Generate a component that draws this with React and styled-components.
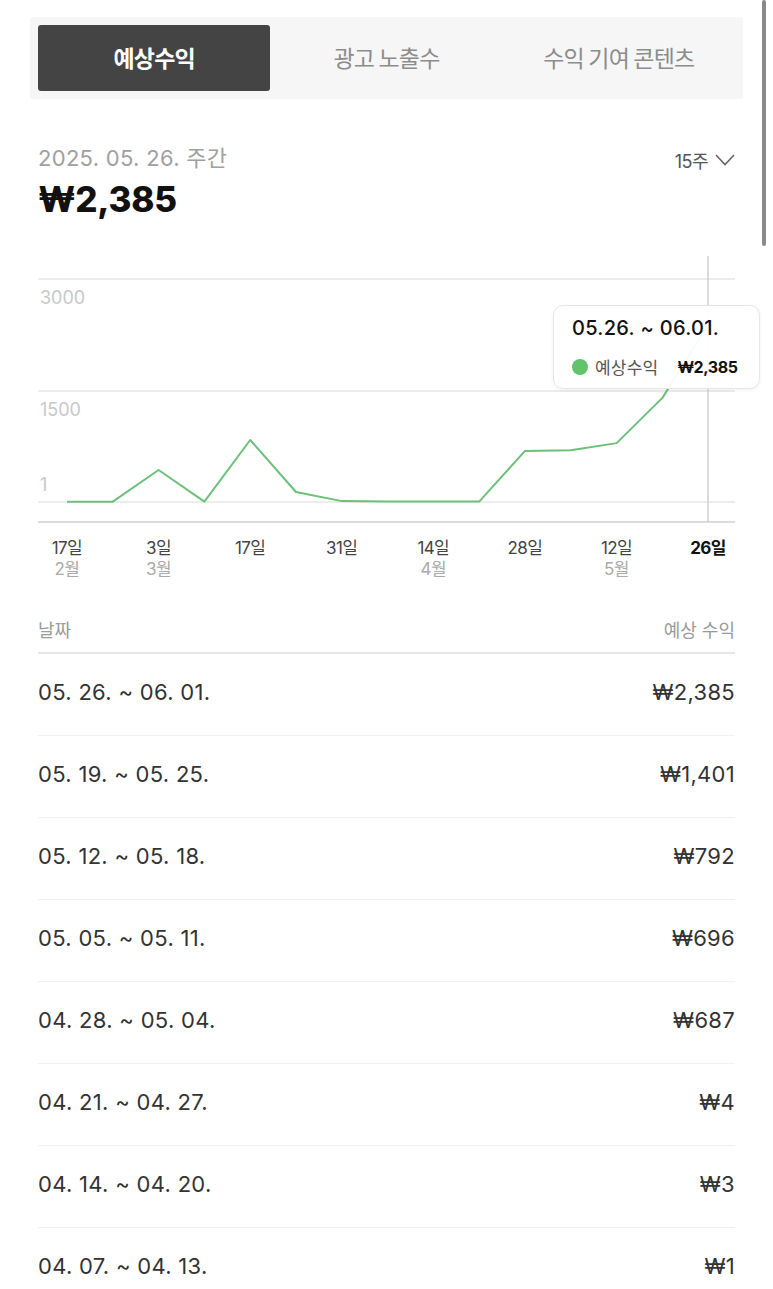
import React from "react";
import styled, { createGlobalStyle } from "styled-components";

const Global = createGlobalStyle`
  html, body { margin: 0; padding: 0; background: #fff; }
  body { font-family: Inter, "Noto Sans CJK KR", sans-serif; color: #222; }
  * { box-sizing: border-box; }
`;

const Page = styled.div`
  width: 773px;
  height: 1289px;
  overflow: hidden;
  position: relative;
  padding-top: 17px;
`;

const ScrollThumb = styled.div`
  position: absolute;
  right: 7px;
  top: 0;
  width: 4px;
  height: 246px;
  border-radius: 2px;
  background: #8a8a8a;
`;

const Tabs = styled.div`
  margin: 0 30px;
  padding: 8px;
  background: #f6f6f6;
  border-radius: 3px;
  display: grid;
  grid-template-columns: repeat(3, 1fr);
  height: 82px;
`;

const Tab = styled.div`
  display: flex;
  align-items: center;
  justify-content: center;
  border-radius: 3px;
  font-family: "Noto Sans CJK KR", sans-serif;
  font-size: 23px;
  letter-spacing: -0.8px;
  padding-bottom: 2px;
  font-weight: ${(p) => (p.$active ? 700 : 400)};
  color: ${(p) => (p.$active ? "#fff" : "#8c8c8c")};
  background: ${(p) => (p.$active ? "#444444" : "transparent")};
`;

const Content = styled.div`
  padding: 0 38px;
`;

const Summary = styled.div`
  display: flex;
  justify-content: space-between;
  align-items: flex-start;
  margin-top: 45px;
`;

const SummaryLeft = styled.div`
  display: flex;
  flex-direction: column;
`;

const DateLabel = styled.div`
  font-size: 22px;
  line-height: 28px;
  color: #a0a0a0;
  letter-spacing: 0.3px;
`;

const Amount = styled.div`
  font-size: 35px;
  line-height: 42px;
  font-weight: 800;
  color: #111;
  margin-top: 6px;
  letter-spacing: -0.3px;
`;

const PeriodSelect = styled.div`
  display: flex;
  align-items: center;
  gap: 7px;
  font-size: 18px;
  color: #555;
  margin-top: 3px;
  letter-spacing: -0.5px;
`;

const ChartWrap = styled.div`
  position: relative;
  margin-top: 36px;
  height: 267px;
`;

const Tooltip = styled.div`
  position: absolute;
  left: 515px;
  top: 49px;
  width: 207px;
  height: 84px;
  background: rgba(255, 255, 255, 0.94);
  border: 1px solid #e6e6e6;
  border-radius: 10px;
  box-shadow: 0 1px 4px rgba(0, 0, 0, 0.06);
  padding: 9px 0 0 18px;
  display: flex;
  flex-direction: column;
  gap: 13px;
`;

const TipTitle = styled.div`
  font-size: 20px;
  line-height: 26px;
  color: #111;
  font-weight: 500;
  letter-spacing: 0.3px;
`;

const TipRow = styled.div`
  display: flex;
  align-items: center;
  gap: 7px;
`;

const Dot = styled.span`
  width: 16px;
  height: 16px;
  border-radius: 50%;
  background: #5fc46a;
`;

const TipLabel = styled.span`
  font-family: "Noto Sans CJK KR", sans-serif;
  font-size: 17px;
  color: #555;
  margin-right: 12px;
  letter-spacing: 0.2px;
`;

const TipValue = styled.span`
  font-size: 16px;
  font-weight: 700;
  color: #111;
  letter-spacing: -0.4px;
`;

const XAxis = styled.div`
  display: grid;
  grid-template-columns: repeat(15, 45.8px);
  padding-left: 6px;
  margin-top: 15px;
  height: 62px;
`;

const XLabel = styled.div`
  display: flex;
  flex-direction: column;
  align-items: center;
  white-space: nowrap;
  line-height: 21px;
`;

const Day = styled.span`
  font-size: 17px;
  color: ${(p) => (p.$bold ? "#111" : "#444")};
  font-weight: ${(p) => (p.$bold ? 700 : 400)};
  letter-spacing: -0.6px;
`;

const Month = styled.span`
  font-size: 17px;
  color: #aaa;
  letter-spacing: -0.6px;
`;

const TableHead = styled.div`
  display: flex;
  justify-content: space-between;
  align-items: center;
  font-size: 18px;
  color: #9a9a9a;
  height: 44px;
  margin-top: 10px;
  border-bottom: 2px solid #e6e6e6;
  padding-bottom: 4px;
`;

const Row = styled.div`
  display: flex;
  justify-content: space-between;
  align-items: center;
  height: 82px;
  padding-bottom: 6px;
  font-size: 22px;
  color: #333;
  border-bottom: 1px solid #f1f1f1;
  letter-spacing: 0.3px;
`;

const values = [5, 5, 430, 5, 834, 135, 12, 8, 6, 6, 687, 696, 792, 1401, 2385];
const W = 697;
const H = 267;
const px = (i) => 29 + i * 45.8;
const py = (v) => 246 - (v * 223) / 3000;

const xLabels = [
  { d: "17일", m: "2월" },
  null,
  { d: "3일", m: "3월" },
  null,
  { d: "17일" },
  null,
  { d: "31일" },
  null,
  { d: "14일", m: "4월" },
  null,
  { d: "28일" },
  null,
  { d: "12일", m: "5월" },
  null,
  { d: "26일", bold: true },
];

const rows = [
  ["05. 26. ~ 06. 01.", "₩2,385"],
  ["05. 19. ~ 05. 25.", "₩1,401"],
  ["05. 12. ~ 05. 18.", "₩792"],
  ["05. 05. ~ 05. 11.", "₩696"],
  ["04. 28. ~ 05. 04.", "₩687"],
  ["04. 21. ~ 04. 27.", "₩4"],
  ["04. 14. ~ 04. 20.", "₩3"],
  ["04. 07. ~ 04. 13.", "₩1"],
];

const axisFont = "Inter, Noto Sans CJK KR, sans-serif";

function Chart() {
  const pts = values.map((v, i) => `${px(i)},${py(v)}`).join(" ");
  return (
    <ChartWrap>
      <svg width={W} height={H} style={{ display: "block" }}>
        <line x1="0" x2={W} y1="23" y2="23" stroke="#ececec" strokeWidth="2" />
        <line x1="0" x2={W} y1="135" y2="135" stroke="#ececec" strokeWidth="2" />
        <line x1="0" x2={W} y1="246" y2="246" stroke="#ececec" strokeWidth="2" />
        <line x1="0" x2={W} y1="266" y2="266" stroke="#dcdcdc" strokeWidth="2" />
        <line x1="670" x2="670" y1="0" y2="266" stroke="#cfcfcf" strokeWidth="1.5" />
        <text x="2" y="48" fontSize="18" fill="#c8c8c8" fontFamily={axisFont}>3000</text>
        <text x="2" y="160" fontSize="18" fill="#c8c8c8" fontFamily={axisFont}>1500</text>
        <text x="2" y="235" fontSize="18" fill="#c8c8c8" fontFamily={axisFont}>1</text>
        <polyline points={pts} fill="none" stroke="#6cc07a" strokeWidth="2" strokeLinejoin="round" />
      </svg>
      <Tooltip>
        <TipTitle>05.26. ~ 06.01.</TipTitle>
        <TipRow>
          <Dot />
          <TipLabel>예상수익</TipLabel>
          <TipValue>₩2,385</TipValue>
        </TipRow>
      </Tooltip>
    </ChartWrap>
  );
}

export default function App() {
  return (
    <Page>
      <Global />
      <ScrollThumb />
      <Tabs>
        <Tab $active>예상수익</Tab>
        <Tab>광고 노출수</Tab>
        <Tab>수익 기여 콘텐츠</Tab>
      </Tabs>
      <Content>
        <Summary>
          <SummaryLeft>
            <DateLabel>2025. 05. 26. 주간</DateLabel>
            <Amount>₩2,385</Amount>
          </SummaryLeft>
          <PeriodSelect>
            15주
            <svg width="20" height="12" viewBox="0 0 20 12">
              <polyline points="1,1 10,10.5 19,1" fill="none" stroke="#666" strokeWidth="1.6" />
            </svg>
          </PeriodSelect>
        </Summary>
        <Chart />
        <XAxis>
          {xLabels.map((l, i) => (
            <XLabel key={i}>
              {l && <Day $bold={l.bold}>{l.d}</Day>}
              {l && l.m && <Month>{l.m}</Month>}
            </XLabel>
          ))}
        </XAxis>
        <TableHead>
          <span>날짜</span>
          <span>예상 수익</span>
        </TableHead>
        {rows.map(([d, v]) => (
          <Row key={d}>
            <span>{d}</span>
            <span>{v}</span>
          </Row>
        ))}
      </Content>
    </Page>
  );
}
